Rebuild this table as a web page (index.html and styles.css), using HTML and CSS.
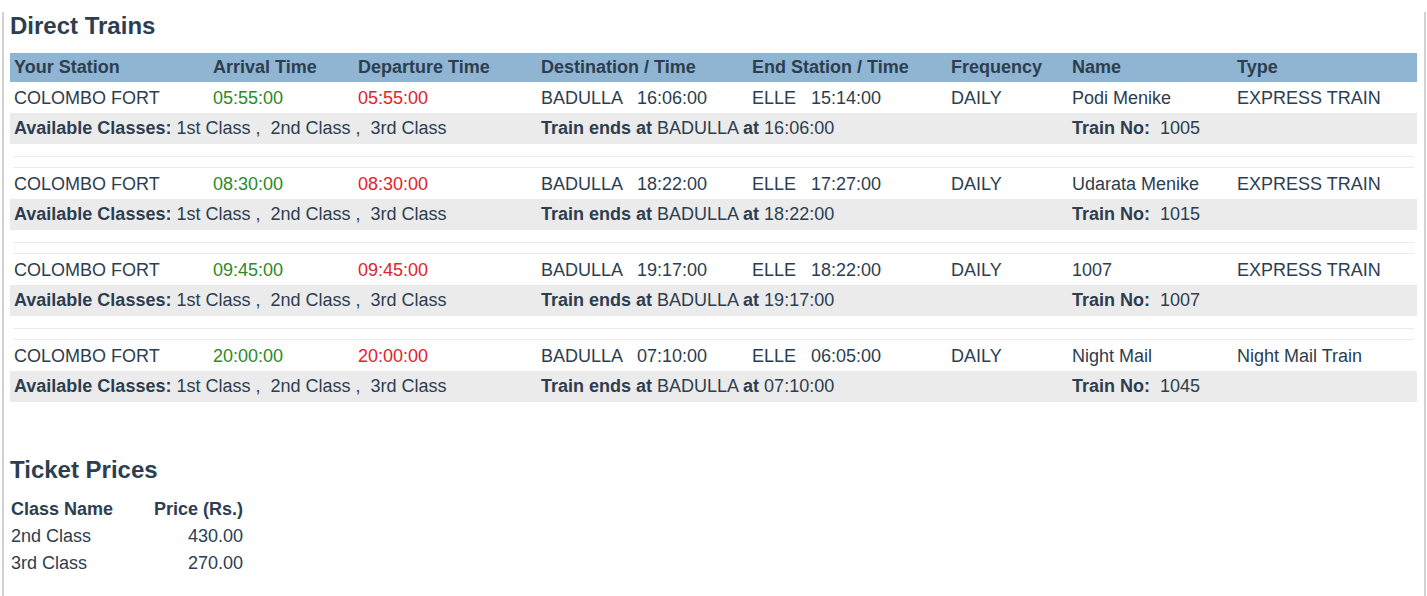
FILE: index.html
```html
<!DOCTYPE html>
<html>
<head>
<meta charset="utf-8">
<link rel="stylesheet" href="styles.css">
</head>
<body>
<div class="panel">
  <h2 class="title">Direct Trains</h2>
  <table class="trains">
    <colgroup>
      <col style="width:199px"><col style="width:145px"><col style="width:183px"><col style="width:211px">
      <col style="width:199px"><col style="width:121px"><col style="width:165px"><col style="width:184px">
    </colgroup>
    <thead>
      <tr class="head">
        <th>Your Station</th><th>Arrival Time</th><th>Departure Time</th><th>Destination / Time</th>
        <th>End Station / Time</th><th>Frequency</th><th>Name</th><th>Type</th>
      </tr>
    </thead>
    <tbody>
      <tr class="main">
        <td>COLOMBO FORT</td><td class="arr">05:55:00</td><td class="dep">05:55:00</td>
        <td>BADULLA &nbsp; 16:06:00</td><td>ELLE &nbsp; 15:14:00</td><td>DAILY</td><td>Podi Menike</td><td>EXPRESS TRAIN</td>
      </tr>
      <tr class="info">
        <td colspan="3"><b>Available Classes:</b> 1st Class , &nbsp;2nd Class , &nbsp;3rd Class</td>
        <td colspan="3"><b>Train ends at</b> BADULLA <b>at</b> 16:06:00</td>
        <td colspan="2"><b>Train No:</b> &nbsp;1005</td>
      </tr>
      <tr class="spacer"><td colspan="8"><div class="lines"></div></td></tr>
    </tbody>
    <tbody>
      <tr class="main">
        <td>COLOMBO FORT</td><td class="arr">08:30:00</td><td class="dep">08:30:00</td>
        <td>BADULLA &nbsp; 18:22:00</td><td>ELLE &nbsp; 17:27:00</td><td>DAILY</td><td>Udarata Menike</td><td>EXPRESS TRAIN</td>
      </tr>
      <tr class="info">
        <td colspan="3"><b>Available Classes:</b> 1st Class , &nbsp;2nd Class , &nbsp;3rd Class</td>
        <td colspan="3"><b>Train ends at</b> BADULLA <b>at</b> 18:22:00</td>
        <td colspan="2"><b>Train No:</b> &nbsp;1015</td>
      </tr>
      <tr class="spacer"><td colspan="8"><div class="lines"></div></td></tr>
    </tbody>
    <tbody>
      <tr class="main">
        <td>COLOMBO FORT</td><td class="arr">09:45:00</td><td class="dep">09:45:00</td>
        <td>BADULLA &nbsp; 19:17:00</td><td>ELLE &nbsp; 18:22:00</td><td>DAILY</td><td>1007</td><td>EXPRESS TRAIN</td>
      </tr>
      <tr class="info">
        <td colspan="3"><b>Available Classes:</b> 1st Class , &nbsp;2nd Class , &nbsp;3rd Class</td>
        <td colspan="3"><b>Train ends at</b> BADULLA <b>at</b> 19:17:00</td>
        <td colspan="2"><b>Train No:</b> &nbsp;1007</td>
      </tr>
      <tr class="spacer"><td colspan="8"><div class="lines"></div></td></tr>
    </tbody>
    <tbody>
      <tr class="main">
        <td>COLOMBO FORT</td><td class="arr">20:00:00</td><td class="dep">20:00:00</td>
        <td>BADULLA &nbsp; 07:10:00</td><td>ELLE &nbsp; 06:05:00</td><td>DAILY</td><td>Night Mail</td><td>Night Mail Train</td>
      </tr>
      <tr class="info">
        <td colspan="3"><b>Available Classes:</b> 1st Class , &nbsp;2nd Class , &nbsp;3rd Class</td>
        <td colspan="3"><b>Train ends at</b> BADULLA <b>at</b> 07:10:00</td>
        <td colspan="2"><b>Train No:</b> &nbsp;1045</td>
      </tr>
    </tbody>
  </table>

  <h2 class="title prices-title">Ticket Prices</h2>
  <div class="prices">
    <div class="ph">Class Name</div><div class="ph num">Price (Rs.)</div>
    <div>2nd Class</div><div class="num">430.00</div>
    <div>3rd Class</div><div class="num">270.00</div>
  </div>
</div>
</body>
</html>
```

FILE: styles.css
```css
html, body {
  margin: 0;
  padding: 0;
  background: #ffffff;
}
body {
  font-family: "Liberation Sans", Arial, sans-serif;
  font-size: 18px;
  color: #2c3e50;
}
.panel {
  margin-left: 2px;
  width: 1407px;
  min-height: 596px;
  border-left: 2px solid #d2d2d2;
  border-right: 2px solid #d2d2d2;
  padding: 0 7px 0 6px;
  box-sizing: content-box;
}
.title {
  margin: 12px 0 14px;
  font-size: 24px;
  line-height: 27px;
  font-weight: bold;
  color: #2c3e50;
}
.trains {
  width: 1407px;
  table-layout: fixed;
  border-collapse: collapse;
}
.trains th,
.trains td {
  text-align: left;
  padding: 4px 4px;
  white-space: nowrap;
  vertical-align: middle;
}
.head th {
  background: #8fb5d2;
  line-height: 21px;
  font-weight: bold;
  color: #2c3e50;
}
.trains .main td {
  line-height: 22px;
  padding-top: 5px;
}
.info td {
  background: #ebebeb;
  line-height: 23px;
}
.arr { color: #2b8a2b; }
.dep { color: #e3222b; }
.trains .spacer td {
  padding: 12px 3px 0;
}
.lines {
  height: 10px;
  border-top: 1px solid #e9ecee;
  border-bottom: 1px solid #e9ecee;
}
.prices-title {
  margin-top: 54px;
  margin-bottom: 13px;
}
.prices {
  display: grid;
  grid-template-columns: 143px 89px;
  margin-left: 1px;
  line-height: 27px;
  white-space: nowrap;
}
.ph { font-weight: bold; }
.num { text-align: right; }
```
